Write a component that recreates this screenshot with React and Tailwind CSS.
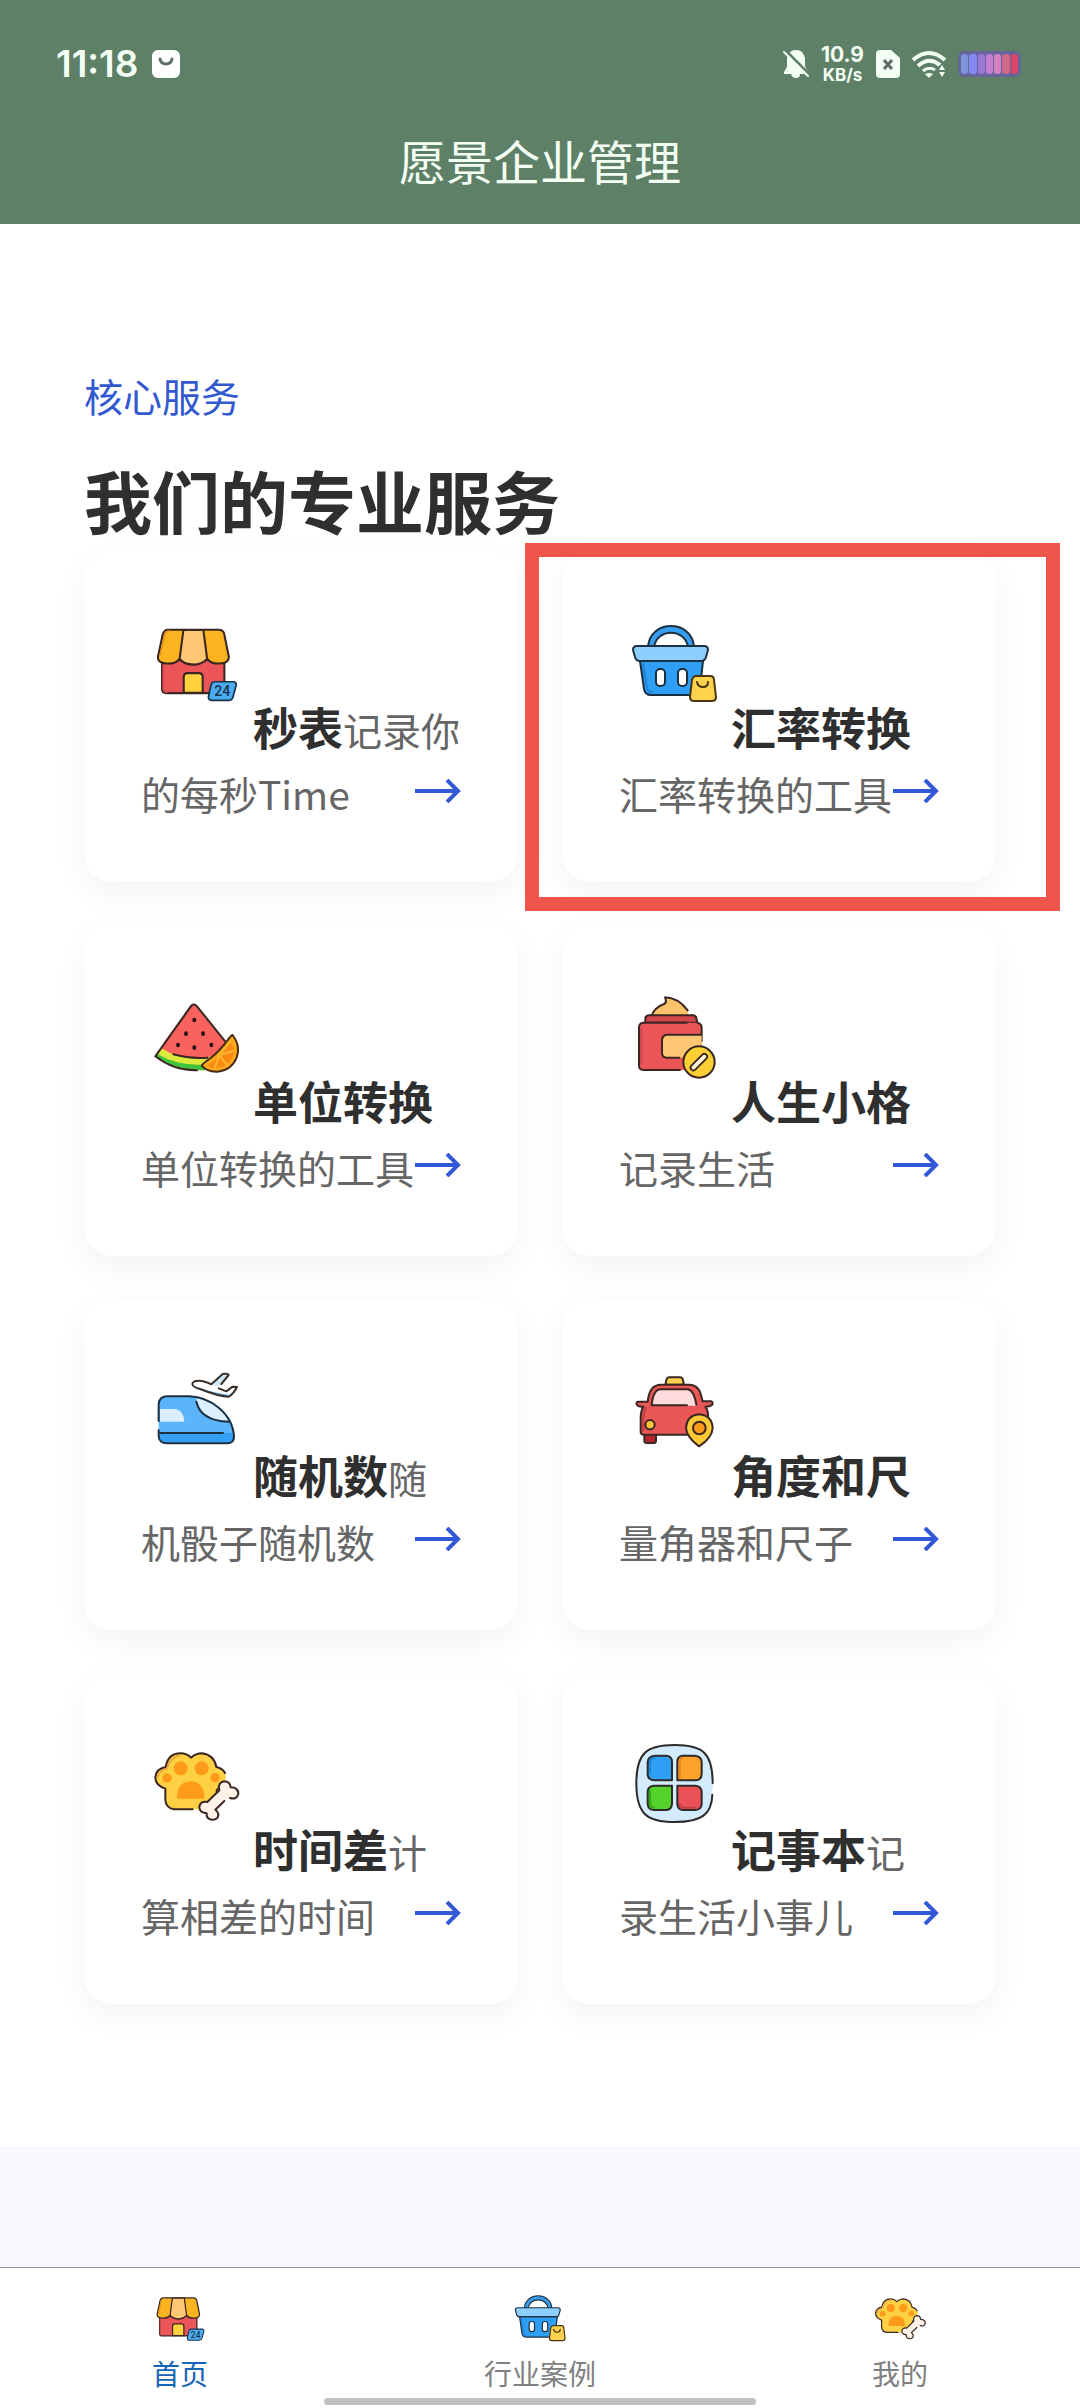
import React from "react";

const INK = "#2f2a2a";

function Icon({ size, viewBox, children }) {
  return (
    <svg className={size} viewBox={viewBox} fill="none" strokeLinecap="round" strokeLinejoin="round" aria-hidden="true">
      {children}
    </svg>
  );
}

function StoreIcon({ size }) {
  return (
    <Icon size={size} viewBox="238 720 325 325">
      <g stroke="#3a2622" strokeWidth="6">
        <path d="M299 870V955Q299 967 312 967H466Q480 967 480 955V870Z" fill="#ec5558" />
        <path d="M302 885V952Q302 964 314 964" stroke="#c9474a" strokeWidth="5" />
        <path d="M362 966V920Q362 909 373 909H405Q417 909 417 920V966Z" fill="#ffd23e" />
        <path d="M316 783H463Q475 783 479 793L493 862Q493 880 468 881Q442 883 430 868Q414 884 390 884Q365 884 350 868Q338 883 312 881Q286 880 287 862L301 797Q305 783 316 783Z" fill="#fbb41f" />
        <path d="M361 784H419L430 868Q414 884 390 884Q365 884 350 868Z" fill="#ffc673" />
        <path d="M319 787Q310 787 307 798L294 856" stroke="#e8941d" strokeWidth="5" />
      </g>
      <path d="M451 934H508Q516 936 514 945L505 978Q502 988 492 988H442Q432 986 434 976L441 944Q443 935 451 934Z" fill="#4bacf2" stroke="#16344a" strokeWidth="5" />
      <text x="474" y="976" textAnchor="middle" fontSize="41" fontWeight="500" fill="#16344a" fontFamily="Roboto, sans-serif">24</text>
    </Icon>
  );
}

function BasketIcon({ size }) {
  return (
    <Icon size={size} viewBox="1 0 112 112">
      <g stroke="#1d3040" strokeWidth="2">
        <path d="M30 39C32 11 74 11 76 39H70C67 20 39 20 36 39Z" fill="#369df0" />
        <path d="M22 53L26 81Q27 87 33 87H74Q81 87 82 80L85 53Z" fill="#2f9ff5" />
        <path d="M19 38H86Q90 38 90 42L88 49Q87 53 83 53H22Q18 53 17 49L15 42Q15 38 19 38Z" fill="#8dd0ff" />
        <path d="M25 56L29 80Q30 84 34 84" stroke="#1c83d8" />
        <rect x="38" y="61" width="9" height="17" rx="4" fill="#fff" />
        <rect x="60" y="61" width="9" height="17" rx="4" fill="#fff" />
      </g>
      <g stroke="#4a3510" strokeWidth="2">
        <path d="M78 68H92Q96 68 96 72L98 89Q98 93 94 93H76Q72 93 72 89L74 72Q75 68 78 68Z" fill="#fdd34e" />
        <path d="M79 74Q80 79 85 79T90 74" />
      </g>
    </Icon>
  );
}

function MelonIcon({ size }) {
  return (
    <Icon size={size} viewBox="5 3 336 336">
      <path d="M156 74Q165 66 173 76L262 190L205 265Q120 275 48 224Z" fill="#f9625d" />
      <path d="M66 202Q125 240 200 230L240 218L205 267Q120 275 48 226Z" fill="#dcea3e" />
      <path d="M54 219Q120 258 205 250L205 267Q120 275 48 226Z" fill="#3fc43a" />
      <path d="M156 76L76 186" stroke="#d8484a" strokeWidth="6" />
      <path d="M173 268Q105 270 48 226L156 74Q165 66 173 76L258 182" stroke="#3a2622" strokeWidth="6" />
      <path d="M102 220Q150 234 205 230" stroke="#3a2622" strokeWidth="6" />
      {[[165, 117], [140, 158], [191, 158], [116, 192], [165, 200], [216, 192]].map(([x, y]) => (
        <ellipse key={x + "-" + y} cx={x} cy={y} rx="6" ry="7" fill="#2b1216" />
      ))}
      <path d="M280 162Q305 195 292 230Q276 268 235 272Q205 274 187 254Q190 248 210 234Q240 212 266 176Q274 164 280 162Z" fill="#fca91c" stroke="#4a2b10" strokeWidth="6" />
      <path d="M273 184Q290 204 281 226Q268 258 232 261Q213 262 204 254Q250 225 273 184Z" fill="#f98a14" />
      <path d="M240 222L282 210M240 222L262 251M240 222L226 262M240 222L272 182" stroke="#fdb62f" strokeWidth="6" />
    </Icon>
  );
}

function JarIcon({ size }) {
  return (
    <Icon size={size} viewBox="-1 3 336 336">
      <g stroke="#3a2622" strokeWidth="6">
        <path d="M97 104Q105 80 134 69Q144 64 137 49Q176 50 205 88L208 104Z" fill="#fdc36a" stroke="none" />
        <path d="M97 104Q105 80 134 69Q144 64 137 49Q176 50 205 88" />
        <path d="M78 125V112Q80 103 89 103H220Q230 103 231 112L234 125Z" fill="#d3474c" />
        <path d="M72 125H234Q247 127 247 140V267H72Q59 267 59 253V140Q59 126 72 125Z" fill="#ec5558" stroke="none" />
        <path d="M182 267H72Q59 267 59 253V140Q59 126 72 125H202M234 125Q247 127 247 140V181" />
        <path d="M66 145V248" stroke="#c9474a" />
        <path d="M247 161H143Q128 163 128 178V216Q128 230 143 230H247Z" fill="#ffc673" stroke="none" />
        <path d="M246 161H143Q128 163 128 178V216Q128 230 143 230H180" />
        <circle cx="239" cy="243" r="47" fill="#fcd034" />
        <path d="M222 260L255 227" strokeWidth="22" />
        <path d="M222 260L255 227" stroke="#fff6d8" strokeWidth="11" />
      </g>
    </Icon>
  );
}

function TrainIcon({ size }) {
  return (
    <Icon size={size} viewBox="5 15 336 336">
      <path d="M82 136H150Q200 138 238 170Q282 206 284 258Q284 277 264 277H84Q58 276 58 254V160Q59 138 82 136Z" fill="#5bb5fa" />
      <path d="M60 246H282Q287 277 264 277H84Q58 276 60 246Z" fill="#34a0f4" />
      <path d="M62 174H108Q133 178 135 212H62Z" fill="#dceffe" />
      <path d="M171 141Q182 209 268 212Q246 160 171 141Z" fill="#dceffe" />
      <g stroke="#1d3040" strokeWidth="6">
        <path d="M58 210V160Q59 138 82 136H150Q200 138 238 170Q282 206 284 258Q284 277 264 277H84Q58 276 58 254V238" />
        <path d="M61 246H251M171 152Q184 209 268 212" />
      </g>
      <path d="M182 88L216 98L250 69L268 68Q274 72 238 108L260 116L280 106L293 107Q284 128 268 137Q250 135 170 109Q156 103 159 96Q165 87 182 88Z" fill="#fff" />
      <path d="M162 104Q210 123 266 131L268 137Q230 132 170 109Z" fill="#4bacf2" />
      <path d="M216 98L250 69L265 70L236 106Z" fill="#cfe9fd" />
      <path d="M246 99L268 72Q268 67 250 69L216 100Q194 89 180 89Q160 89 159 99Q160 108 182 114Q240 137 268 137Q284 127 293 108L280 107L261 121L238 112" stroke="#3a3028" strokeWidth="6" />
    </Icon>
  );
}

function TaxiIcon({ size }) {
  return (
    <Icon size={size} viewBox="-1 15 336 336">
      <g stroke="#3a2622" strokeWidth="6">
        <path d="M75 245H110V270Q109 276 103 276H82Q75 276 75 270Z" fill="#b5272c" />
        <path d="M138 101L142 84Q144 79 150 79H182Q188 79 190 84L194 101Z" fill="#fcd34e" />
        <path d="M85 152Q90 103 122 101H212Q235 103 243 125L250 151H276Q282 153 279 161Q272 167 258 167Q268 182 266 200V251H72Q64 250 64 242V200Q64 180 72 167Q54 168 52 160Q50 152 57 152Z" fill="#e95759" />
        <path d="M97 164Q101 118 122 116H205Q224 118 231 164Z" fill="#ffdcdb" stroke="none" />
        <path d="M203 163H97Q101 118 122 115H205Q224 118 231 161" />
        <path d="M72 240V203Q73 185 80 171" stroke="#c63e43" />
        <circle cx="92" cy="221" r="14" fill="#fcc53a" />
        <path d="M239 286Q200 258 200 229Q203 193 240 190Q278 194 280 231Q279 260 239 286Z" fill="#fcc936" />
        <circle cx="240" cy="231" r="19" fill="#fb981c" />
      </g>
    </Icon>
  );
}

function PawIcon({ size }) {
  return (
    <Icon size={size} viewBox="5 12 336 336">
      <path d="M160 250H104Q80 246 78 222V188Q48 178 48 154Q50 128 79 123Q86 82 124 82Q142 82 155 95Q170 82 187 82Q224 86 231 123Q258 130 260 155Q258 174 234 188V250Z" fill="#fed043" />
      <path d="M160 250H104Q80 246 78 222V188Q48 178 48 154Q50 128 79 123Q86 82 124 82Q142 82 155 95Q170 82 187 82Q224 86 231 123Q250 127 257 141" stroke="#3a2622" strokeWidth="6" />
      <path d="M54 156Q58 134 82 129Q93 92 122 88" stroke="#eda53c" strokeWidth="5" />
      <g fill="#ff9b18">
        <circle cx="124" cy="127" r="21" />
        <circle cx="187" cy="127" r="21" />
        <circle cx="83" cy="156" r="14" />
        <circle cx="227" cy="155" r="14" />
        <path d="M113 218Q111 168 154 166Q197 170 195 218Z" />
      </g>
      <path d="M232 200L240 192Q234 170 254 166Q272 166 274 184Q297 184 297 204Q293 220 277 219Q266 218 260 219L228 251Q242 262 234 276Q222 286 208 278Q200 272 202 262Q180 260 180 243Q182 224 204 228Z" fill="#fff3e8" />
      <path d="M255 225L228 251Q242 262 234 276Q222 286 208 278Q200 272 202 262Q180 260 180 243Q182 224 204 228L240 193Q234 170 254 166Q272 166 274 184Q297 184 297 204Q292 222 272 216" stroke="#3a2622" strokeWidth="6" />
      <path d="M232 199Q229 190 239 187" stroke="#3a2622" strokeWidth="5" />
    </Icon>
  );
}

function AppsIcon({ size }) {
  return (
    <Icon size={size} viewBox="-1 12 336 336">
      <path d="M166 57C252 57 280 82 280 172C280 262 252 288 166 288C80 288 51 262 51 172C51 82 80 57 166 57Z" fill="#d3ecfd" />
      <g stroke={INK} strokeWidth="6">
        <path d="M280 172C280 82 252 57 166 57C80 57 51 82 51 172C51 262 80 288 166 288C248 288 277 264 279 206" />
        <path d="M106 89H142Q158 91 158 107V163H106Q85 162 85 144V108Q86 91 106 89Z" fill="#2f9ff5" />
        <path d="M189 89H226Q247 91 247 108V144Q247 162 229 163H174V107Q174 91 189 89Z" fill="#ffa22b" />
        <path d="M103 179H158V233Q157 251 141 252H103Q86 251 85 234V196Q86 181 103 179Z" fill="#55d22c" />
        <path d="M174 179H229Q246 181 247 197V234Q246 251 228 252H190Q175 251 174 234Z" fill="#ea5257" />
      </g>
      <g strokeWidth="6">
        <path d="M106 96Q92 97 92 109V142" stroke="#1c83d8" />
        <path d="M189 96Q181 97 181 108V155" stroke="#e78817" />
        <path d="M92 195V232Q93 244 104 245" stroke="#36a818" />
        <path d="M181 234Q182 244 191 245H226" stroke="#c63e43" />
      </g>
    </Icon>
  );
}

const services = [
  { name: "秒表", desc: "记录你的每秒Time", icon: StoreIcon },
  { name: "汇率转换", desc: "汇率转换的工具", icon: BasketIcon, highlighted: true },
  { name: "单位转换", desc: "单位转换的工具", icon: MelonIcon },
  { name: "人生小格", desc: "记录生活", icon: JarIcon },
  { name: "随机数", desc: "随机骰子随机数", icon: TrainIcon },
  { name: "角度和尺", desc: "量角器和尺子", icon: TaxiIcon },
  { name: "时间差", desc: "计算相差的时间", icon: PawIcon },
  { name: "记事本", desc: "记录生活小事儿", icon: AppsIcon },
];

const tabs = [
  { name: "首页", icon: StoreIcon, active: true },
  { name: "行业案例", icon: BasketIcon },
  { name: "我的", icon: PawIcon },
];

const batteryBars = ["bg-[#7f93dc]", "bg-[#8588ee]", "bg-[#9a78d6]", "bg-[#c47fd0]", "bg-[#d87fc0]", "bg-[#d06888]", "bg-[#dc4468]"];

function StatusBar() {
  return (
    <div className="flex items-center justify-between pt-[38px] pr-[59px] pl-14 text-[#f4fff4]">
      <div className="flex h-[52px] items-center gap-3.5">
        <span className="font-[Inter] text-[37px] leading-[52px] font-semibold">11:18</span>
        <svg className="h-7 w-7" viewBox="0 0 28 28" aria-hidden="true">
          <rect width="28" height="28" rx="6" fill="#fff" />
          <path d="M8 9Q9 14 14 14T20 9" fill="none" stroke="#5c7065" strokeWidth="3" strokeLinecap="round" />
        </svg>
      </div>
      <div className="flex h-[52px] items-center gap-3">
        <svg className="h-7 w-[26px]" viewBox="0 0 26 28" aria-hidden="true">
          <path d="M13 0C19 0 22 5 22 10V16L25 23V24H17Q17 28 13 28T8 24H1V22L4 17V10C4 5 7 0 13 0Z" fill="currentColor" />
          <path d="M2 0L26 24" stroke="#5e8067" strokeWidth="3" />
          <path d="M1 2L25 26" stroke="currentColor" strokeWidth="2" strokeLinecap="round" />
        </svg>
        <div className="flex flex-col items-center font-[Inter] font-bold">
          <span className="text-[21px] leading-[21px]">10.9</span>
          <span className="text-[17px] leading-5">KB/s</span>
        </div>
        <svg className="h-7 w-6" viewBox="0 0 24 28" aria-hidden="true">
          <path d="M4 0H15L24 8V24Q24 28 20 28H4Q0 28 0 24V4Q0 0 4 0Z" fill="currentColor" />
          <path d="M8 10L16 19M16 10L8 19" stroke="#5e6f66" strokeWidth="3" />
        </svg>
        <svg className="h-7 w-[34px]" viewBox="0 0 34 28" fill="none" stroke="currentColor" strokeWidth="4" aria-hidden="true">
          <path d="M1 10Q17 -4 33 10" />
          <path d="M6 16Q17 6 28 15" />
          <path d="M11 21Q17 16 23 20" strokeWidth="3" />
          <path d="M13 24Q17 22 21 24L17 28Z" fill="currentColor" stroke="none" />
          <path d="M27 20L30 15L33 20ZM27 22H33L30 27Z" fill="currentColor" stroke="none" />
        </svg>
        <div className="flex h-[26px] w-[63px] gap-px rounded-md bg-[#65659a] p-[3px]">
          {batteryBars.map((color) => (
            <span key={color} className={"flex-1 rounded-[3px] " + color} />
          ))}
        </div>
      </div>
    </div>
  );
}

function ServiceCard({ name, desc, icon: Glyph, highlighted }) {
  return (
    <a href="#" className="relative rounded-[28px] bg-white p-[57px] text-[39px] leading-[64px] text-[#666] shadow-[0_11px_33px_rgba(0,0,0,0.05)]">
      <span className="mb-[26px] inline-block align-baseline">
        <Glyph size="block h-28 w-28" />
      </span>
      <strong className="text-[45px] font-bold text-[#2f2f2f]">{name}</strong>
      {desc}
      <svg className="absolute right-[57px] bottom-[79px] h-6 w-[46px]" viewBox="0 0 46 24" fill="none" stroke="#3359d8" strokeWidth="4" aria-hidden="true">
        <path d="M0 12H44M32 1L43 12L32 23" />
      </svg>
      {highlighted && <span className="pointer-events-none absolute -top-2 -right-[64px] -bottom-[29px] -left-[37px] z-10 border-[14px] border-[#f0554c]" />}
    </a>
  );
}

export default function App() {
  return (
    <div className="flex min-h-screen flex-col bg-white font-['Noto_Sans_CJK_SC',sans-serif]">
      <header className="h-56 bg-[#5e8067]">
        <StatusBar />
        <h1 className="pt-[35px] text-center text-[47px] leading-[70px] text-[#f4fff4]">愿景企业管理</h1>
      </header>

      <main className="flex flex-1 flex-col">
        <section className="px-[84px] pt-[143px] pb-[142px]">
          <p className="text-[39px] leading-[56px] text-[#3359d0]">核心服务</p>
          <h2 className="mt-[29px] mb-[3px] text-[68px] leading-[96px] font-bold text-[#2f2f2f]">我们的专业服务</h2>
          <div className="grid grid-cols-2 gap-x-11 gap-y-[43px]">
            {services.map((service) => (
              <ServiceCard key={service.name} {...service} />
            ))}
          </div>
        </section>
        <section className="flex-1 bg-[#f8f9ff]" />
      </main>

      <nav className="relative grid h-[141px] grid-cols-3 border-t border-[#8f939f] bg-white">
        {tabs.map(({ name, icon: Glyph, active }) => (
          <a key={name} href="#" className="flex flex-col items-center pt-[17px]">
            <Glyph size="h-[67px] w-[67px]" />
            <span className={active ? "text-[28px] leading-[42px] text-[#1664b8]" : "text-[28px] leading-[42px] text-[#808080]"}>{name}</span>
          </a>
        ))}
        <span className="absolute bottom-[3px] left-1/2 h-[7px] w-2/5 -translate-x-1/2 rounded-full bg-[#c2c2c2]" />
      </nav>
    </div>
  );
}
